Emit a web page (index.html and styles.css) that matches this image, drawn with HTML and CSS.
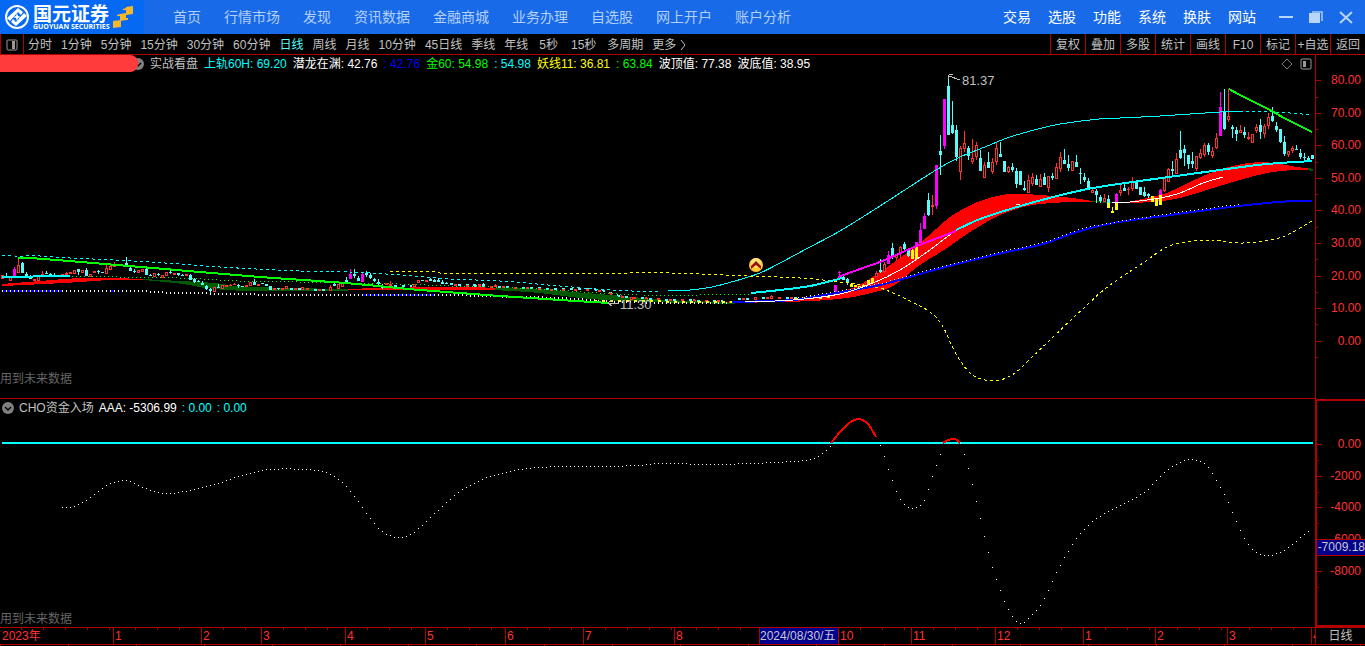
FILE: index.html
```html
<!DOCTYPE html>
<html lang="zh-CN">
<head>
  <meta charset="UTF-8">
  <title>国元证券</title>
  <meta name="viewport" content="width=device-width, initial-scale=1">
  <link rel="stylesheet" href="styles.css">
</head>
<body>
<header class="header">
  <a class="logo" href="#">
    <svg class="logo-mark" viewBox="0 0 26 26" aria-hidden="true">
      <circle cx="13" cy="13" r="11" fill="none" stroke="#fff" stroke-width="2"/>
      <path d="M3 14l3 3 8-9 3 3 2-3-5-4z" fill="#fff"/>
      <path d="M23 12l-3-3-8 9-3-3-2 3 5 4z" fill="#fff"/>
      <path d="M13 9l1 3 3 1-3 1-1 3-1-3-3-1 3-1z" fill="#fff"/>
    </svg>
    <span class="logo-text">
      <strong>国元证券</strong>
      <small>GUOYUAN SECURITIES</small>
    </span>
    <svg class="logo-steps" viewBox="0 0 21 23" aria-hidden="true">
      <path d="M13 1l7-1v8l-7 1zM7 8l6-1v7l-6 1zM0 15l8-1v7l-8 1z" fill="#f5b82a"/>
      <path d="M10 3l3-1v2h-3zM4 9l3-1v2H4zM13 12h2v2h-2z" fill="#f5b82a"/>
    </svg>
  </a>
  <nav class="main-nav">
    <a href="#">首页</a>
    <a href="#">行情市场</a>
    <a href="#">发现</a>
    <a href="#">资讯数据</a>
    <a href="#">金融商城</a>
    <a href="#">业务办理</a>
    <a href="#">自选股</a>
    <a href="#">网上开户</a>
    <a href="#">账户分析</a>
  </nav>
  <nav class="sys-nav">
    <a href="#">交易</a>
    <a href="#">选股</a>
    <a href="#">功能</a>
    <a href="#">系统</a>
    <a href="#">换肤</a>
    <a href="#">网站</a>
  </nav>
  <div class="win-buttons">
    <button aria-label="最小化"><svg viewBox="0 0 14 14"><path d="M0 7h14" stroke="#b9d5fb" stroke-width="2"/></svg></button>
    <button aria-label="还原"><svg viewBox="0 0 14 14"><path d="M3 2h10v9" fill="none" stroke="#86b3f5" stroke-width="2"/><path d="M0 3h11v10H0z" fill="#b9d5fb"/></svg></button>
    <button aria-label="关闭"><svg viewBox="0 0 14 14"><path d="M1 2l12 11M13 2 1 13" stroke="#b9d5fb" stroke-width="2"/></svg></button>
  </div>
</header>

<div class="toolbar">
  <button class="side-toggle" aria-label="侧栏"><svg viewBox="0 0 12 12"><rect x="1" y="1" width="10" height="10" rx="1" fill="none" stroke="#999"/><path d="M6 2h3v8H6z" fill="#999"/></svg></button>
  <div class="periods">
    <button>分时</button>
    <button>1分钟</button>
    <button>5分钟</button>
    <button>15分钟</button>
    <button>30分钟</button>
    <button>60分钟</button>
    <button class="active">日线</button>
    <button>周线</button>
    <button>月线</button>
    <button>10分钟</button>
    <button>45日线</button>
    <button>季线</button>
    <button>年线</button>
    <button class="sec">5秒</button>
    <button class="sec">15秒</button>
    <button>多周期</button>
    <button class="more">更多<svg viewBox="0 0 6 10"><path d="M1 0l4 5-4 5" fill="none" stroke="#c0c0c0"/></svg></button>
  </div>
  <div class="tools">
    <button>复权</button>
    <button>叠加</button>
    <button>多股</button>
    <button>统计</button>
    <button>画线</button>
    <button>F10</button>
    <button>标记</button>
    <button>+自选</button>
    <button>返回</button>
  </div>
</div>

<main>
  <section class="panel price-panel">
    <div class="plot">
      <div class="legend">
        <span class="stock-name"></span>
        <button class="fold" aria-label="指标菜单"><svg viewBox="0 0 12 12"><circle cx="6" cy="6" r="6" fill="#808080"/><path d="M3 5l3 3 3-3" fill="none" stroke="#000" stroke-width="1.5"/></svg></button>
        <span class="gray">实战看盘</span>
        <span class="cyan">上轨60H: 69.20</span>
        <span class="white">潜龙在渊: 42.76</span>
        <span class="blue">: 42.76</span>
        <span class="green">金60: 54.98</span>
        <span class="cyan">: 54.98</span>
        <span class="yellow">妖线11: 36.81</span>
        <span class="green">: 63.84</span>
        <span class="white">波顶值: 77.38</span>
        <span class="white">波底值: 38.95</span>
        <span class="legend-icons">
          <svg viewBox="0 0 12 12"><path d="M6 1l5 5-5 5-5-5z" fill="none" stroke="#777"/></svg>
          <svg viewBox="0 0 12 12"><rect x="1" y="1" width="10" height="10" rx="1" fill="none" stroke="#999"/><path d="M3 3h3v6H3z" fill="#999"/></svg>
        </span>
      </div>
      <div class="canvas">
        <svg id="price" class="chart" viewBox="0 72 1315 326" role="img" aria-label="日线"></svg>
        <p class="note">用到未来数据</p>
      </div>
    </div>
    <ul class="axis">
      <li>80.00</li>
      <li>70.00</li>
      <li>60.00</li>
      <li>50.00</li>
      <li>40.00</li>
      <li>30.00</li>
      <li>20.00</li>
      <li>10.00</li>
      <li>0.00</li>
    </ul>
  </section>

  <section class="panel fund-panel">
    <div class="plot">
      <div class="legend">
        <button class="fold" aria-label="指标菜单"><svg viewBox="0 0 12 12"><circle cx="6" cy="6" r="6" fill="#808080"/><path d="M3 5l3 3 3-3" fill="none" stroke="#000" stroke-width="1.5"/></svg></button>
        <span class="gray">CHO资金入场</span>
        <span class="white">AAA: -5306.99</span>
        <span class="cyan">: 0.00</span>
        <span class="cyan">: 0.00</span>
      </div>
      <div class="canvas">
        <svg id="fund" class="chart" viewBox="0 416 1315 211" role="img" aria-label="CHO资金入场"></svg>
        <p class="note">用到未来数据</p>
      </div>
    </div>
    <ul class="axis">
      <li>0.00</li>
      <li>-2000</li>
      <li>-4000</li>
      <li>-6000<span class="cursor-value">-7009.18</span></li>
      <li>-8000</li>
    </ul>
  </section>
</main>

<footer class="timeline">
  <ol class="months">
    <li>2023年</li>
    <li>1</li>
    <li>2</li>
    <li>3</li>
    <li>4</li>
    <li>5</li>
    <li>6</li>
    <li>7</li>
    <li>8</li>
    <li class="cursor-date"><span>2024/08/30/五</span></li>
    <li>10</li>
    <li>11</li>
    <li>12</li>
    <li>1</li>
    <li>2</li>
    <li>3</li>
    <li>4</li>
  </ol>
  <span class="period-name">日线</span>
</footer>

<script src="chart.js"></script>
</body>
</html>
```
FILE: styles.css
```css
* {
  box-sizing: border-box;
}

body {
  margin: 0;
  background-color: #000;
  color: #c0c0c0;
  font-family: "Liberation Sans", "Noto Sans CJK SC", sans-serif;
  font-size: 12px;
  line-height: 16px;
  overflow-x: hidden;
}

a {
  color: inherit;
  text-decoration: none;
}

button {
  background: none;
  border: none;
  padding: 0;
  color: inherit;
  font: inherit;
  white-space: nowrap;
  cursor: pointer;
}

ul, ol {
  list-style: none;
  margin: 0;
  padding: 0;
}

svg {
  display: block;
}

/* header */
.header {
  display: flex;
  align-items: center;
  height: 34px;
  background-color: #186ae8;
  font-size: 14px;
  white-space: nowrap;
}

.logo {
  display: flex;
  align-items: center;
  gap: 3px;
  width: 144px;
  height: 34px;
  padding-left: 4px;
  background-color: #0669f3;
  color: #fff;
}

.logo-mark {
  width: 26px;
  height: 26px;
}

.logo-text {
  display: flex;
  flex-direction: column;
}

.logo-text strong {
  font-family: "Noto Sans CJK SC", sans-serif;
  font-size: 19px;
  font-weight: bold;
  line-height: 20px;
}

.logo-text small {
  font-family: "Open Sans", sans-serif;
  font-size: 7px;
  font-weight: bold;
  line-height: 8px;
}

.logo-steps {
  width: 21px;
  height: 23px;
}

.main-nav {
  display: flex;
  flex: 1;
  gap: 23px;
  padding-left: 29px;
  color: #b4d0f8;
}

.sys-nav {
  display: flex;
  gap: 17px;
  color: #fff;
}

.win-buttons {
  display: flex;
  gap: 16px;
  padding: 0 12px 0 23px;
}

.win-buttons svg {
  width: 14px;
  height: 14px;
}

/* toolbar */
.toolbar {
  display: flex;
  height: 21px;
  border-bottom: 1px solid #b00000;
}

.toolbar button {
  padding-top: 1px;
}

.side-toggle {
  display: flex;
  align-items: center;
  justify-content: center;
  width: 24px;
  border-left: 1px solid #b00000;
  border-right: 1px solid #b00000;
}

.side-toggle svg {
  width: 12px;
  height: 12px;
}

.periods {
  display: flex;
  flex: 1;
  gap: 9px;
  padding-left: 4px;
}

.periods .active {
  color: #54fcfc;
}

.periods .sec {
  padding-left: 2px;
  padding-right: 2px;
}

.more {
  display: flex;
  align-items: center;
  gap: 4px;
}

.more svg {
  width: 6px;
  height: 10px;
}

.tools {
  display: flex;
}

.tools button {
  width: 35px;
  border-left: 1px solid #b00000;
}

/* panels */
.panel {
  display: flex;
}

.plot {
  flex: 1;
  min-width: 0;
}

.price-panel .plot {
  border-bottom: 1px solid #b00000;
}

.legend {
  display: flex;
  align-items: center;
  gap: 5px;
  height: 17px;
  white-space: nowrap;
}

.price-panel .legend {
  gap: 6px;
}

.fund-panel .legend {
  padding-left: 2px;
}

.stock-name {
  align-self: stretch;
  width: 138px;
  margin-right: -12px;
  background-color: #ff3b3b;
  border-radius: 0 8px 8px 0;
  z-index: 1;
}

.fold svg {
  width: 12px;
  height: 12px;
}

.legend-icons {
  display: flex;
  gap: 7px;
  margin-left: auto;
  padding-right: 3px;
}

.legend-icons svg {
  width: 12px;
  height: 12px;
}

.gray { color: #c0c0c0; }
.cyan { color: #00ffff; }
.white { color: #fff; }
.blue { color: #0000ff; }
.green { color: #00ff00; }
.yellow { color: #ffff00; }

.canvas {
  display: grid;
}

.chart {
  grid-area: 1 / 1;
  width: 100%;
  shape-rendering: crispEdges;
}

.note {
  grid-area: 1 / 1;
  align-self: end;
  margin: 0;
  color: #666;
}

.price-panel .note {
  padding-bottom: 11px;
}

.axis {
  display: grid;
  grid-auto-rows: 1fr;
  width: 50px;
  padding: 9px 0 42px;
  border-left: 1px solid #b00000;
  color: #ff3232;
}

.fund-panel .axis {
  padding: 27px 0 38px;
  border: 2px solid #b00000;
  border-right: none;
}

.axis li {
  position: relative;
  display: flex;
  align-items: center;
  justify-content: flex-end;
  padding-right: 4px;
}

.axis li::before,
.axis li::after {
  content: "";
  position: absolute;
  left: 0;
  top: 50%;
  width: 5px;
  height: 1px;
  background-color: #b00000;
}

.axis li::after {
  top: 100%;
  width: 2px;
}

.axis .cursor-value {
  position: absolute;
  left: 0;
  right: 0;
  top: 50%;
  z-index: 1;
  background-color: #00008c;
  border-top: 1px solid #b00000;
  border-bottom: 1px solid #b00000;
  color: #c8c8c8;
  line-height: 15px;
  text-align: right;
}

/* time axis */
.timeline {
  display: flex;
  height: 19px;
  border-top: 1px solid #b00000;
  background: repeating-linear-gradient(90deg, #b00000 0 1px, transparent 1px 68px) 0 100% / 100% 2px no-repeat;
}

.months {
  display: grid;
  flex: 1;
  grid-template-columns:
    minmax(0, 113fr) minmax(0, 88fr) minmax(0, 60fr) minmax(0, 84fr)
    minmax(0, 80fr) minmax(0, 80fr) minmax(0, 78fr) minmax(0, 91fr)
    minmax(0, 85fr) minmax(0, 79fr) minmax(0, 73fr) minmax(0, 84fr)
    minmax(0, 88fr) minmax(0, 72fr) minmax(0, 72fr) minmax(0, 84fr)
    minmax(0, 4fr);
  height: 17px;
  border-bottom: 1px solid #b00000;
  color: #ff3232;
}

.months li {
  padding-left: 1px;
  border-left: 1px solid #b00000;
  background: repeating-linear-gradient(90deg, transparent 0 21px, #b00000 21px 22px) 0 0 / 100% 2px no-repeat;
  overflow: hidden;
  white-space: nowrap;
}

.months li:first-child {
  border-left: none;
  padding-left: 2px;
}

.months .cursor-date {
  padding-left: 0;
  background: #00008c;
  color: #c8c8c8;
}

.period-name {
  width: 50px;
  height: 17px;
  border-left: 1px solid #b00000;
  border-bottom: 1px solid #b00000;
  text-align: center;
}

/* chart marks */
.line { fill: none; stroke-width: 1; }
.thick { stroke-width: 2; }
.dash { stroke-dasharray: 3 3; }
.dots { stroke-dasharray: 1 3; }
.s-cyan { stroke: #00ffff; }
.s-green { stroke: #00ff00; }
.s-yellow { stroke: #ffff00; }
.s-white { stroke: #fff; }
.s-blue { stroke: #0000ff; }
.s-magenta { stroke: #ff00ff; }
.s-red { stroke: #ff0000; }
.s-gray { stroke: #c0c0c0; }
.s-dark { stroke: #005a00; }
.f-red { fill: #ff0000; }
.f-dark { fill: #005a00; }
.f-white { fill: #fff; }
.bar-d { fill: #54fcfc; }
.bar-u { fill: #ff3232; }
.bar-m { fill: #ff00ff; }
.bar-y { fill: #ffff00; }
.hole { fill: #000; }
.tiny-d { stroke: #54fcfc; stroke-width: 2; stroke-dasharray: 3 5; }
.tiny-u { stroke: #ff3232; stroke-width: 2; stroke-dasharray: 3 9; }
.tiny-y { stroke: #ffff00; stroke-width: 2; stroke-dasharray: 3 5; }
.mark { fill: #c0c0c0; font-size: 13px; }
.badge { shape-rendering: auto; }
```
FILE: chart.js
```js
const NS = "http://www.w3.org/2000/svg";
const price = document.getElementById("price");
const fund = document.getElementById("fund");

function add(svg, tag, attrs) {
  const el = document.createElementNS(NS, tag);
  for (const k in attrs) el.setAttribute(k, attrs[k]);
  svg.appendChild(el);
  return el;
}

// "x,y x,y ..." -> [[x, y], ...]
function parse(s) {
  return s.split(" ").map(p => p.split(",").map(Number));
}

// smooth curve through the points
function curve(p) {
  let d = "M" + p[0];
  for (let i = 0; i < p.length - 1; i++) {
    const a = p[i - 1] || p[i], b = p[i], c = p[i + 1], e = p[i + 2] || c;
    const h = (c[0] - b[0]) / 3;
    const m1 = c[0] === a[0] ? 0 : (c[1] - a[1]) / (c[0] - a[0]);
    const m2 = e[0] === b[0] ? 0 : (e[1] - b[1]) / (e[0] - b[0]);
    d += `C${b[0] + h} ${b[1] + h * m1} ${c[0] - h} ${c[1] - h * m2} ${c[0]} ${c[1]}`;
  }
  return d;
}

function line(svg, cls, s) {
  return add(svg, "path", { class: "line " + cls, d: curve(parse(s)) });
}

function band(cls, top, bottom) {
  const d = curve(parse(top)) + "L" + curve(parse(bottom).reverse()).slice(1) + "Z";
  add(price, "path", { class: cls, d: d });
}

// one dot for each trading day
function dotted(svg, s, step, w, h) {
  const path = line(svg, "", s);
  const pts = parse(s), end = pts[pts.length - 1][0];
  const len = path.getTotalLength();
  let x = pts[0][0];
  for (let l = 0; l <= len && x <= end; l += 0.5) {
    const p = path.getPointAtLength(l);
    if (p.x >= x) {
      add(svg, "rect", { class: "f-white", x: x, y: Math.round(p.y), width: w, height: h });
      x += step;
    }
  }
  path.remove();
}

// x, high, open/close top, open/close bottom, low, kind
const candles = [
  [2,275,275,279,279,"u"],[6,273,276,278,278,"d"],[10,277,277,281,281,"u"],[14,267,269,276,276,"m"],
  [18,258,265,273,273,"u"],[22,262,263,273,273,"d"],[26,272,274,277,277,"d"],[30,275,277,279,279,"d"],
  [34,279,279,281,281,"u"],[38,276,276,281,281,"u"],[42,271,274,276,276,"u"],[46,271,273,274,274,"d"],
  [50,273,274,276,276,"d"],[54,273,275,276,276,"d"],[62,274,274,276,276,"u"],[66,272,273,275,275,"u"],
  [70,272,272,274,274,"u"],[74,270,270,274,274,"u"],[78,269,269,272,275,"d"],[82,270,270,273,273,"u"],
  [86,268,270,276,276,"d"],[90,274,274,277,277,"u"],[94,271,271,273,273,"u"],[98,270,271,272,274,"d"],
  [102,272,272,273,273,"d"],[106,265,268,274,274,"u"],[110,265,266,270,270,"u"],[114,262,265,267,267,"u"],
  [126,257,263,265,265,"d"],[130,267,268,271,271,"d"],[134,269,271,272,273,"d"],[138,270,270,273,273,"u"],
  [142,269,269,272,272,"u"],[146,268,269,275,275,"d"],[150,274,275,276,276,"d"],[154,273,273,277,277,"u"],
  [158,273,274,275,276,"d"],[162,275,275,278,278,"u"],[166,272,272,276,276,"u"],[170,270,272,273,274,"d"],
  [174,273,273,275,275,"u"],[178,273,273,275,276,"d"],[182,274,275,276,276,"d"],[186,274,274,276,276,"u"],
  [190,274,275,280,280,"d"],[194,278,279,282,283,"d"],[198,280,281,282,282,"d"],[202,281,283,285,285,"d"],
  [206,285,286,289,290,"d"],[210,288,289,291,293,"d"],[214,287,287,292,292,"u"],[218,284,287,288,288,"d"],
  [222,285,285,289,289,"u"],[226,285,285,287,287,"u"],[230,284,285,286,286,"u"],[234,283,284,285,285,"u"],
  [238,284,285,286,288,"d"],[242,286,286,287,287,"d"],[246,285,285,287,287,"u"],[250,282,282,286,286,"u"],
  [254,279,282,285,285,"d"],[258,284,284,286,286,"u"],[262,283,283,284,284,"d"],[266,284,284,286,286,"d"],
  [270,286,286,290,290,"d"],[274,288,288,290,290,"u"],[278,288,288,289,290,"d"],[282,288,288,290,290,"u"],
  [286,286,286,289,289,"u"],[302,287,287,290,290,"u"],[330,285,287,291,291,"u"],[334,283,284,286,286,"d"],
  [338,284,284,289,289,"u"],[342,283,283,287,287,"u"],[346,277,280,282,282,"d"],[350,269,274,279,279,"m"],
  [354,269,274,276,278,"d"],[358,276,278,281,281,"d"],[362,273,274,282,282,"m"],[366,271,273,275,277,"d"],
  [370,273,275,278,279,"d"],[374,278,279,281,282,"d"],[378,279,282,284,286,"d"],[382,284,286,288,289,"d"],
  [386,283,283,285,285,"u"],[390,281,284,286,286,"u"],[414,284,284,287,287,"u"],[418,280,280,283,283,"u"],
  [422,280,280,281,281,"d"],[426,280,280,282,282,"u"],[430,278,279,281,281,"d"],[434,279,280,282,282,"d"],
  [438,278,280,282,282,"d"],[442,280,282,284,284,"d"],[446,282,283,284,284,"d"],[474,284,284,286,286,"d"],
  [479,284,284,286,286,"u"],[483,283,284,286,286,"d"],[495,284,285,287,287,"u"],[631,297,297,300,300,"u"],
  [743,298,298,300,300,"u"],[755,297,297,300,300,"u"],[771,295,296,299,299,"u"],
  [835,285,285,292,292,"m"],[839,271,272,273,280,"m"],[843,275,277,280,280,"d"],[847,278,279,283,285,"d"],
  [851,283,284,287,287,"y"],[855,285,285,287,287,"y"],[859,286,286,287,287,"y"],[863,284,285,288,288,"y"],
  [868,280,280,285,285,"y"],[872,278,278,283,283,"y"],[876,271,273,277,277,"u"],[880,259,270,272,273,"d"],
  [884,262,264,272,273,"u"],[888,251,255,264,264,"m"],[892,243,248,257,259,"d"],[896,254,254,258,260,"u"],
  [900,246,247,254,258,"u"],[904,242,244,249,252,"d"],[908,248,250,256,257,"d"],[912,248,250,259,259,"y"],
  [916,242,242,247,247,"m"],[916,247,247,259,259,"y"],[920,223,230,243,243,"m"],[924,213,216,229,229,"m"],
  [928,193,200,215,216,"d"],[932,195,205,207,215,"u"],[936,165,165,206,209,"m"],[940,135,151,155,175,"d"],
  [944,99,99,146,149,"m"],[948,75,86,135,135,"d"],[952,101,125,133,134,"d"],[956,125,130,157,161,"d"],
  [960,146,148,172,180,"u"],[964,131,143,149,152,"u"],[968,146,148,156,160,"d"],[972,139,158,162,164,"u"],
  [976,142,145,157,160,"u"],[980,150,158,171,171,"d"],[984,162,165,178,178,"u"],[988,152,162,168,168,"d"],
  [992,158,162,172,174,"u"],[996,143,148,162,165,"u"],[1000,142,154,157,157,"d"],[1004,161,161,172,172,"d"],
  [1008,166,167,172,173,"u"],[1012,163,167,170,172,"d"],[1016,168,171,184,188,"d"],[1020,171,171,185,185,"d"],
  [1024,181,188,190,191,"d"],[1028,175,180,193,193,"u"],[1032,173,177,184,186,"u"],[1036,175,179,185,185,"d"],
  [1040,174,179,187,187,"u"],[1044,173,177,185,185,"d"],[1048,176,176,188,192,"u"],[1052,173,176,178,180,"d"],
  [1056,163,167,179,179,"u"],[1060,152,157,169,172,"u"],[1064,149,160,164,164,"d"],[1068,155,164,168,171,"d"],
  [1072,161,161,171,171,"u"],[1076,155,162,167,167,"d"],[1080,168,173,174,184,"d"],[1084,173,177,180,182,"d"],
  [1088,178,181,190,190,"d"],[1092,189,190,193,193,"u"],[1096,189,191,195,203,"d"],[1100,195,197,201,203,"d"],
  [1104,194,198,202,202,"u"],[1108,195,199,203,203,"d"],[1108,203,203,208,208,"y"],[1112,207,211,213,213,"y"],
  [1116,193,194,202,202,"m"],[1116,202,202,210,210,"y"],[1120,185,190,193,196,"u"],[1124,184,188,191,191,"d"],
  [1128,187,189,190,195,"u"],[1132,177,182,189,191,"u"],[1136,180,182,189,189,"d"],[1140,187,187,195,195,"d"],
  [1144,187,192,196,197,"d"],[1148,193,194,196,198,"d"],[1152,196,196,202,202,"y"],[1156,198,198,206,206,"y"],
  [1160,189,190,195,195,"m"],[1160,195,195,205,205,"y"],[1164,177,178,191,192,"u"],[1168,168,169,182,182,"u"],
  [1172,161,169,171,177,"d"],[1176,153,159,174,174,"u"],[1180,131,150,158,159,"d"],[1184,145,149,153,166,"d"],
  [1188,155,155,164,169,"d"],[1192,152,161,164,168,"d"],[1196,156,156,169,171,"u"],[1200,149,153,158,159,"u"],
  [1204,143,145,155,157,"u"],[1208,143,145,152,155,"d"],[1212,147,151,156,158,"u"],[1216,133,138,148,149,"u"],
  [1220,92,107,136,136,"m"],[1224,89,111,129,130,"d"],[1228,89,116,120,122,"u"],[1232,125,127,129,138,"d"],
  [1236,127,130,134,141,"d"],[1240,125,130,133,133,"u"],[1244,127,132,135,138,"d"],[1248,132,137,139,140,"u"],
  [1252,134,134,143,143,"u"],[1256,124,127,131,133,"u"],[1260,119,125,132,139,"d"],[1264,124,126,134,138,"u"],
  [1268,113,117,126,129,"u"],[1272,107,116,121,122,"d"],[1276,122,126,130,132,"d"],[1280,129,129,142,143,"d"],
  [1284,136,142,154,156,"d"],[1288,151,151,155,157,"u"],[1292,146,148,151,153,"u"],[1296,145,149,150,150,"d"],
  [1300,149,153,157,159,"d"],[1304,153,157,158,160,"d"],[1308,156,158,160,161,"d"],[1312,155,155,159,159,"d"]
];

// ribbons
band("f-red", "2,284 40,281 80,278 110,278 143,279", "2,286 45,284 80,282 110,280 143,280");
band("f-dark", "143,279 180,281 216,283 235,286 290,288 348,289", "143,280 165,282 190,285 205,288 245,291 348,291");
band("f-red", "348,289 380,288 462,287 500,288", "348,290 380,290 462,290 500,290");
band("f-dark", "495,288 540,289 573,292 623,296 653,299 690,301 735,302", "495,290 540,293 580,298 623,301 690,303 735,304");
band("f-red",
  "732,302 790,300 830,294 850,289 863,283 880,272 900,258 920,243 936,229 950,217 965,208 980,201 1007,194 1040,195 1073,198 1092,201",
  "732,303 780,302 813,301 847,298 867,294 893,286 917,267 947,248 973,230 1000,215 1023,207 1040,204 1070,202 1092,202");
band("f-red",
  "1127,202 1147,198 1167,193 1190,182 1213,172 1237,165 1260,162 1280,164 1297,167 1312,169",
  "1127,203 1153,202 1180,198 1213,188 1240,180 1267,173 1293,170 1312,170");
line(price, "s-dark", "1092,201 1112,203");
line(price, "s-dark thick", "1308,169 1313,170");

// flat stretches where the candles are only a few pixels high
line(price, "tiny-d", "290,289 328,290");
line(price, "tiny-u", "294,289 328,290");
line(price, "tiny-d", "394,286 412,286");
line(price, "tiny-d", "450,284 480,286 500,287 560,289 600,290 625,297 735,302");
line(price, "tiny-u", "454,285 500,287 560,290 600,291 625,297 735,302");
line(price, "tiny-y", "594,301 735,302");
line(price, "tiny-d", "738,299 830,297");
line(price, "tiny-u", "742,299 830,297");
line(price, "tiny-y", "795,299 832,297");

candles.forEach(([x, hi, top, bottom, lo, kind]) => {
  add(price, "rect", { class: "bar-" + kind, x: x, y: hi, width: 1, height: Math.max(lo - hi, 1) });
  add(price, "rect", { class: "bar-" + kind, x: x - 1, y: top, width: 3, height: Math.max(bottom - top, 1) });
  if (kind === "u" && bottom - top > 2) {
    add(price, "rect", { class: "hole", x: x, y: top + 1, width: 1, height: bottom - top - 2 });
  }
});

// indicator lines
line(price, "s-cyan dash", "2,255 14,256 40,256 70,258 115,260 165,263 220,267 300,271 350,272 400,275 450,279 500,281 560,286 610,290 660,292");
line(price, "s-cyan", "668,291 690,290 712,287 735,281 760,273 780,263 810,247 840,231 880,206 936,170 960,157 985,147 1010,137 1055,125 1099,119 1120,118 1160,116 1220,112 1240,111");
line(price, "s-cyan dash", "1240,111 1272,112 1290,113 1312,115");
line(price, "s-green dots", "72,276 120,277 180,278 240,281 300,282 345,283 400,284 450,286 520,288 600,293 640,295 700,295 750,294");
line(price, "s-yellow dash", "390,272 435,272 440,273 630,273 670,273 750,276 800,278 840,282 880,288 893,293 910,301 930,312 942,325 955,352 970,373 985,380 1000,380 1015,373 1030,359 1050,340 1075,316 1085,307 1100,293 1120,278 1143,263 1165,248 1180,243 1210,240 1240,243 1265,241 1285,236 1312,221");
line(price, "s-blue thick", "2,291 63,291");
line(price, "s-blue thick", "110,291 115,291");
line(price, "s-blue thick", "363,295 435,295");
dotted(price, "2,290 146,290 148,291 190,292 230,293 290,294 340,294 440,294 520,296 560,297 590,299 620,301 680,302 730,302", 4, 1, 2);
line(price, "s-cyan thick", "2,277 30,277 36,276 70,276");
line(price, "s-green thick", "18,258 30,258 117,265 200,272 260,277 345,283 420,290 500,296 560,300 609,303");
line(price, "s-blue thick", "732,302 793,300 830,294 880,285 920,274 953,265 1007,252 1043,244 1080,231 1113,223 1163,216 1230,207 1267,203 1293,201 1312,201");
dotted(price, "794,298 830,292 880,283 920,272 953,263 1007,250 1043,242 1080,229 1113,222 1163,214 1230,205 1240,204", 4, 1, 1);
line(price, "s-white", "745,302 793,300 840,294 873,283 900,270 927,252 952,233");
line(price, "s-white", "1016,204 1020,204");
line(price, "s-white", "1112,203 1130,202 1160,198 1180,193 1203,183 1223,177");
line(price, "s-cyan thick", "751,293 780,290 810,286 835,280 842,278");
line(price, "s-magenta thick", "838,277 860,269 880,262 912,248 956,231");
line(price, "s-cyan thick", "956,230 980,219 1017,207 1057,196 1093,188 1147,180 1227,169 1267,164 1312,161");
line(price, "s-green thick", "1229,89 1240,95 1272,111 1284,118 1312,132");

// high and low labels
line(price, "s-gray", "949,76 960,80");
line(price, "s-gray", "948,79 949,75 953,75");
add(price, "text", { class: "mark", x: 962, y: 85 }).textContent = "81.37";
line(price, "s-gray", "608,303 619,303");
line(price, "s-gray", "608,303 612,306");
line(price, "s-gray", "608,303 612,300");
add(price, "text", { class: "mark", x: 620, y: 309 }).textContent = "11.30";

// signal badge
add(price, "circle", { class: "badge", cx: 756, cy: 265, r: 7, fill: "#ffc830" });
add(price, "circle", { class: "badge", cx: 756, cy: 263, r: 5, fill: "#ffe27a" });
add(price, "path", { class: "badge", d: "M751 266l5-5 5 5v3l-5-4-5 4z", fill: "#a01008" });

// fund chart
line(fund, "s-cyan thick", "2,443 1313,443");
dotted(fund, "62,507 70,507 80,503 95,494 105,486 118,481 130,481 145,488 165,493 185,491 215,484 245,474 270,469 305,469 325,472 340,480 355,497 370,518 382,531 398,537 412,533 425,522 440,508 460,491 480,480 505,472 540,467 590,466 640,465 660,463 710,464 750,463 790,461 815,458 828,448 832,443", 4, 1, 1);
line(fund, "s-red thick", "831,443 840,432 848,424 858,419 868,424 876,437");
dotted(fund, "880,445 885,459 892,480 900,499 908,507 917,507 925,498 930,482 937,462 943,447", 4, 1, 1);
line(fund, "s-red thick", "943,443 948,440 955,439 960,443");
dotted(fund, "960,443 964,454 970,475 980,518 990,560 1000,590 1010,613 1020,623 1028,618 1040,605 1060,565 1075,540 1090,523 1105,513 1145,491 1165,471 1180,462 1190,459 1205,464 1215,478 1228,502 1240,530 1252,549 1264,555 1275,554 1290,546 1305,533 1312,528", 4, 1, 1);
```
